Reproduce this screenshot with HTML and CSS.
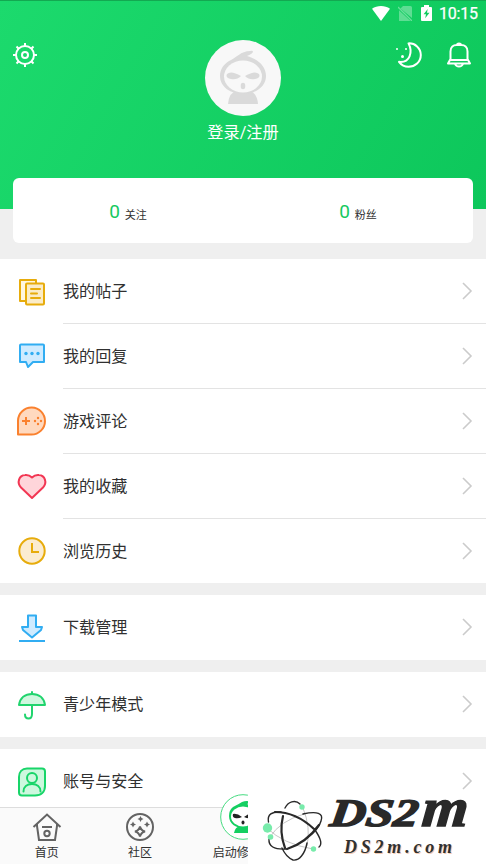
FILE: index.html
```html
<!DOCTYPE html>
<html lang="zh-CN">
<head>
<meta charset="utf-8">
<title>我的</title>
<link rel="stylesheet" href="styles.css">
</head>
<body>
<div class="app">
  <header class="hero">
    <div class="status">
      <svg class="wifi" width="18" height="15" viewBox="0 0 18 15"><path fill="#fff" d="M0 2.8C5 -.9 13 -.9 18 2.8L9 15Z"/></svg>
      <svg class="sim" width="14" height="15" viewBox="0 0 14 15"><path fill="#fff" opacity=".32" d="M5 0H12.5Q14 0 14 1.5V12L2.5 2.5ZM1 4.2L12.500 15H1Z"/><path stroke="#fff" opacity=".36" stroke-width="1.3" d="M0 1L14 15"/></svg>
      <svg class="battery" width="11" height="16" viewBox="0 0 11 16"><path fill="#fff" fill-rule="evenodd" d="M3 0H8V2H10Q11 2 11 3V15Q11 16 10 16H1Q0 16 0 15V3Q0 2 1 2H3ZM6.700 4L2.600 9.200H5L4.200 13.200L8.500 7.800H6Z"/></svg>
      <span class="time">10:15</span>
    </div>
    <div class="profile-bar">
      <svg class="gear" width="26" height="26" viewBox="0 0 26 26" fill="none" stroke="#fff" stroke-width="2"><circle cx="13" cy="13" r="9"/><circle cx="13" cy="13" r="3"/><path d="M13 1V4M13 22V25M1 13H4M22 13H25M4.500 4.500L6.700 6.700M19.300 19.300L21.500 21.500M21.500 4.500L19.300 6.700M6.700 19.300L4.500 21.500"/></svg>
      <div class="profile">
        <svg width="76" height="76" viewBox="0 0 76 76"><circle cx="38" cy="38" r="38" fill="#f8f8f8"/><path fill="#dadada" d="M23 64Q24 52 33 50H43Q52 52 53 64Z"/><path fill="#dadada" d="M24 21C31 18 36 11 45 11Q48 10 48 12Q47 14 42 16C53 19 61 26 61 36C61 47 50 54 38 54S15 47 15 36C15 29 19 24 24 21Z"/><ellipse cx="38" cy="36.500" rx="19" ry="16" fill="#f8f8f8"/><path fill="#dadada" d="M22 34Q26 30 36 36Q32 40 26 39Q20 38 22 34ZM54 34Q50 30 40 36Q44 40 50 39Q56 38 54 34Z"/><ellipse cx="38" cy="46" rx="2.300" ry="3.300" fill="#dadada"/></svg>
        <div class="login">登录/注册</div>
      </div>
      <div class="actions">
        <svg width="26" height="26" viewBox="0 0 26 26" fill="none" stroke="#fff" stroke-width="2" stroke-linejoin="round"><path d="M12.500 1.400C19 1 24.800 6 24.800 13S19 24.800 12.500 24.800C8.500 24.800 5 22.500 3 19.800C14 21 17 10 12.500 1.400Z"/><circle cx="6.500" cy="14.500" r="1.500" fill="#fff" stroke="none"/><path stroke-width="1.500" d="M0 7H2M9 7H11"/></svg>
        <svg width="26" height="26" viewBox="0 0 26 26" fill="none" stroke="#fff" stroke-width="2" stroke-linejoin="round"><path d="M4.500 17V9.500C4.500 5 7.500 3 10.500 3H15.500C18.500 3 21.500 5 21.500 9.500V17L24 21.500H2ZM11 3Q11 1.500 13 1.500T15 3M4 18H22M9 22Q10 24.500 13 24.500T17 22"/></svg>
      </div>
    </div>
  </header>
  <section class="stats">
    <div class="stat"><b>0</b><span>关注</span></div>
    <div class="stat"><b>0</b><span>粉丝</span></div>
  </section>
  <main>
    <section class="group">
      <div class="row">
        <svg class="icon" viewBox="0 0 32 32" fill="none" stroke="#e7ac0c" stroke-width="2" stroke-linejoin="round"><path d="M10 25H4V4H20V8" fill="#fff6df"/><rect x="10" y="7.500" width="18" height="21" rx="1" fill="#fbecc8"/><path d="M15 13H24M15 17.500H21M15 22H24" stroke-linecap="round"/></svg>
        <div class="label"><span>我的帖子</span><svg class="arrow" viewBox="0 0 12 20"><path d="M2 2L10 10L2 18"/></svg></div>
      </div>
      <div class="row">
        <svg class="icon" viewBox="0 0 32 32"><path fill="#cfebff" stroke="#31adf2" stroke-width="2" stroke-linejoin="round" d="M5 4.500H27Q28 4.500 28 5.500V22H17L12 27L10 22H4V5.500Q4 4.500 5 4.500Z"/><g fill="#31adf2"><circle cx="10" cy="13.500" r="1.700"/><circle cx="16" cy="13.500" r="1.700"/><circle cx="22" cy="13.500" r="1.700"/></g></svg>
        <div class="label"><span>我的回复</span><svg class="arrow" viewBox="0 0 12 20"><path d="M2 2L10 10L2 18"/></svg></div>
      </div>
      <div class="row">
        <svg class="icon" viewBox="0 0 32 32"><path fill="#ffd9bf" stroke="#fa812e" stroke-width="2" stroke-linejoin="round" d="M2 29.500V15.500A13.500 13.500 0 1 1 15.500 29.500Z"/><path stroke="#fa812e" stroke-width="2" d="M6 16H14M10 12V20"/><g fill="#fa812e"><circle cx="22" cy="13" r="1.200"/><circle cx="22" cy="19" r="1.200"/><circle cx="19" cy="16" r="1.200"/><circle cx="25" cy="16" r="1.200"/></g></svg>
        <div class="label"><span>游戏评论</span><svg class="arrow" viewBox="0 0 12 20"><path d="M2 2L10 10L2 18"/></svg></div>
      </div>
      <div class="row">
        <svg class="icon" viewBox="0 0 32 32"><path fill="#ffd5da" stroke="#f23653" stroke-width="2" stroke-linejoin="round" d="M16 28L5 17.500C.500 12.500 3 5.500 9 5Q13 4.500 16 7.500Q19 4.500 23 5C29 5.500 31.500 12.500 27 17.500Z"/></svg>
        <div class="label"><span>我的收藏</span><svg class="arrow" viewBox="0 0 12 20"><path d="M2 2L10 10L2 18"/></svg></div>
      </div>
      <div class="row">
        <svg class="icon" viewBox="0 0 32 32" stroke="#e7ac0c" stroke-width="2"><circle cx="16" cy="16" r="12.700" fill="#fbecd1"/><path fill="none" d="M16 8V17H23"/></svg>
        <div class="label"><span>浏览历史</span><svg class="arrow" viewBox="0 0 12 20"><path d="M2 2L10 10L2 18"/></svg></div>
      </div>
    </section>
    <section class="group">
      <div class="row">
        <svg class="icon" viewBox="0 0 32 32" stroke="#31adf2" stroke-width="2"><path fill="#cfebff" stroke-linejoin="round" d="M12 3.500H20V15H26L25 18L16 25.500L7 18L6 15H12Z"/><path d="M3 29H29"/></svg>
        <div class="label"><span>下载管理</span><svg class="arrow" viewBox="0 0 12 20"><path d="M2 2L10 10L2 18"/></svg></div>
      </div>
    </section>
    <section class="group">
      <div class="row">
        <svg class="icon" viewBox="0 0 32 32" stroke="#21d46e" stroke-width="2" stroke-linecap="round" stroke-linejoin="round"><path fill="#d0f7df" d="M3 16C4 9 9 5 16 5S28 9 29 16Z"/><path fill="none" d="M16 3V5M16 16V25Q16 29.500 12.500 29.500T9 25.500"/></svg>
        <div class="label"><span>青少年模式</span><svg class="arrow" viewBox="0 0 12 20"><path d="M2 2L10 10L2 18"/></svg></div>
      </div>
    </section>
    <section class="group">
      <div class="row">
        <svg class="icon" viewBox="0 0 32 32" stroke="#18d569" stroke-width="2"><path fill="#cdf8de" d="M11 2.500H26Q29 2.500 29 5.500V20C29 26 25 29.500 19 29.500H6Q3 29.500 3 26.500V11C3 6 6 2.500 11 2.500Z"/><circle cx="16" cy="12" r="5" fill="none"/><path fill="none" stroke-linecap="round" d="M7.500 25.500C7.500 21 11 18 16 18S24.500 21 24.500 25.500"/></svg>
        <div class="label"><span>账号与安全</span><svg class="arrow" viewBox="0 0 12 20"><path d="M2 2L10 10L2 18"/></svg></div>
      </div>
    </section>
  </main>
  <nav class="tabs">
    <div class="tab"><svg width="30" height="30" viewBox="0 0 30 30" fill="none" stroke="#636363" stroke-width="2"><path d="M1.500 15L15 2.500L28.500 15M5 11.500V14L7 28H23L25 14V11.500M10 15H20"/><circle cx="15" cy="21.500" r="2.700"/></svg><span>首页</span></div>
    <div class="tab"><svg width="30" height="30" viewBox="0 0 30 30"><circle cx="15" cy="15" r="13" fill="none" stroke="#636363" stroke-width="2"/><path fill="none" stroke="#636363" stroke-width="2" d="M15 14.500Q16 18.500 20 19.500Q16 20.500 15 24.500Q14 20.500 10 19.500Q14 18.500 15 14.500Z"/><path fill="#636363" d="M15.500 4L16.500 6L18.500 7L16.500 8L15.500 10L14.500 8L12.500 7L14.500 6ZM8 9.500L9 11.500L11 12.500L9 13.500L8 15.500L7 13.500L5 12.500L7 11.500ZM22 9.500L23 11.500L25 12.500L23 13.500L22 15.500L21 13.500L19 12.500L21 11.500Z"/></svg><span>社区</span></div>
    <div class="tab center"><svg width="46" height="46" viewBox="0 0 46 46"><circle cx="23" cy="23" r="22.300" fill="#fff" stroke="#45db80" stroke-width="1"/><path fill="#14cf61" d="M14 39Q15 33 20 32H26Q32 33 33 39ZM13 13Q19 10 22 8Q27 6 31 8L27 10Q37 14 37 22C37 30 30 34 23 34S9 30 9 22Q9 16 13 13Z"/><ellipse cx="23" cy="22.500" rx="12" ry="10" fill="#fff"/><path fill="#222" d="M13 20Q17 19 22 23Q18 25 15 24Q12 23 13 20ZM33 20Q29 19 24 23Q28 25 31 24Q34 23 33 20Z"/><ellipse cx="23" cy="28.500" rx="1.500" ry="2" fill="#222"/></svg><span>启动修改</span></div>
  </nav>
  <svg class="brand" width="238" height="72" viewBox="248 792 238 72">
    <rect x="248" y="792" width="238" height="72" fill="#fff"/>
    <g fill="none" stroke="#b8b8b8" stroke-width=".8"><path d="M267 828Q283 844 313 849M270 837Q280 821 304 814M303 808Q311 828 307 846"/></g>
    <g fill="none" stroke="#292929" stroke-width="1.400" stroke-linecap="round"><path d="M285 808C288 802 295 799 300 804"/><path d="M268.500 822C267 814 272 811.500 281 812"/><path d="M303 814C317 811 324 813 321 821Q319 829 307 838"/><path d="M286 849Q268 850 269 839"/><path d="M282 848Q286 857 293 860C299 861 305 854 307 843"/><path d="M315 830Q324 843 319 847"/></g>
    <g fill="none" stroke="#292929" stroke-linecap="round" stroke-width="2.200"><path d="M275 812Q296 812 314 829M283 816Q279 832 285 848M319 825Q306 843 287 849"/></g>
    <g fill="#78ebab"><circle cx="267.500" cy="828" r="4.700"/><circle cx="270.500" cy="837" r="2.800"/><circle cx="302" cy="807" r="2.700"/><circle cx="313.500" cy="849" r="2.700"/></g>
    <text class="brand-main" transform="translate(329 826) skewX(-7)" textLength="88" lengthAdjust="spacingAndGlyphs">DS2</text>
    <text class="brand-m" transform="translate(421 826) skewX(-5)" textLength="46" lengthAdjust="spacingAndGlyphs">m</text>
    <text class="brand-glow" x="345" y="853.500" textLength="108">DS2m.com</text>
    <text class="brand-sub" x="344" y="852.500" textLength="108">DS2m.com</text>
  </svg>
</div>
</body>
</html>
```
FILE: styles.css
```css
* { box-sizing: border-box; }
body { margin: 0; background: #efefef; color: #303030; font-family: Roboto, "Noto Sans CJK SC", sans-serif; }
svg { display: block; flex: none; }
.app { position: relative; width: 486px; height: 864px; overflow: hidden; display: flex; flex-direction: column; }
.hero { height: 209px; flex: none; background: linear-gradient(120deg, #1cda6d, #0dc75b); border-top: 1px solid #13a951; }
.status { height: 26px; display: flex; align-items: center; justify-content: flex-end; padding-right: 8px; color: #fff; }
.wifi, .sim, .battery { margin-top: -2px; }
.sim { margin-left: 8px; }
.battery { margin-left: 9px; }
.time { margin-left: 7px; width: 39px; font-size: 16px; font-weight: 400; line-height: 26px; letter-spacing: -.2px; white-space: nowrap; -webkit-text-stroke: .25px #fff; }
.profile-bar { display: grid; grid-template-columns: 1fr 90px 1fr; padding: 13px 14px 0; }
.gear { margin-top: 2px; margin-left: -2px; }
.profile { display: flex; flex-direction: column; align-items: center; }
.login { margin-top: 5px; color: #fff; font-size: 16.200px; line-height: 23px; white-space: nowrap; }
.actions { display: flex; justify-content: flex-end; gap: 24px; padding-top: 2px; }
.stats { height: 65px; flex: none; display: flex; margin: -31px 13px 16px; border-radius: 6px; background: #fff; }
.stat { flex: 1; display: flex; align-items: flex-start; justify-content: center; gap: 5px; padding-top: 22px; }
.stat b { color: #16c960; font-size: 19px; font-weight: 400; line-height: 24px; }
.stat span { margin-top: 8px; font-size: 11px; line-height: 16px; }
main { display: flex; flex-direction: column; gap: 12px; }
.group { background: #fff; }
.row { height: 65px; display: flex; align-items: center; padding-left: 16px; }
.row:nth-child(5) { height: 64px; }
.icon { width: 32px; height: 32px; }
.row:nth-child(n+2) .icon { margin-top: -1px; }
.label { flex: 1; height: 65px; display: flex; align-items: center; justify-content: space-between; margin-left: 15px; padding-right: 13px; font-size: 16.100px; line-height: 24px; border-bottom: 1px solid #e3e3e3; }
.label span { padding-top: 2px; }
.row:last-child .label { border-bottom-color: transparent; }
.arrow { width: 12px; height: 20px; fill: none; stroke: #cbcbcb; stroke-width: 1.6; }
.tabs { position: absolute; left: 0; top: 807px; width: 486px; height: 57px; display: flex; background: #fafafa; border-top: 1px solid #ddd; }
.tab { width: 93.3px; display: flex; flex-direction: column; align-items: center; padding-top: 4px; font-size: 12px; }
.tab span { margin-top: 3px; line-height: 17px; white-space: nowrap; }
.center svg { margin-top: -18px; margin-left: 19px; }
.center span { margin-top: 5px; margin-left: 7px; }
.brand { position: absolute; left: 248px; top: 792px; overflow: visible; }
.brand-main, .brand-m { fill: #292929; stroke: #292929; stroke-width: 1.5; font: italic 700 39px "Liberation Serif", serif; }
.brand-m { font-size: 54px; }
.brand-sub, .brand-glow { font: italic 700 18px "Liberation Serif", serif; }
.brand-sub { fill: #303030; }
.brand-glow { fill: #f0a880; opacity: .6; }
```
